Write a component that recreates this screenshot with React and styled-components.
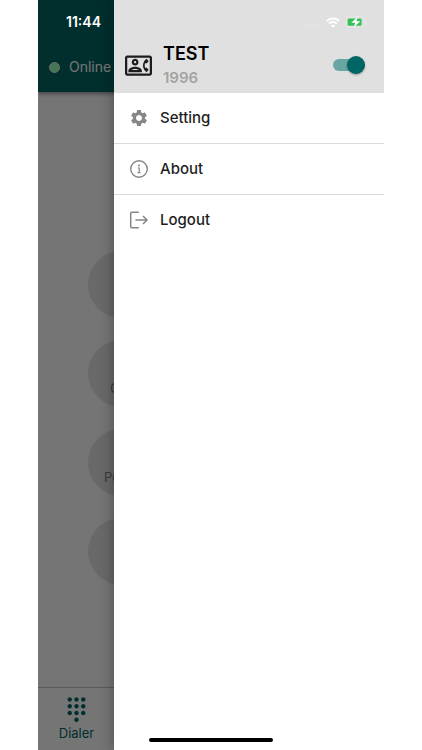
import { useState } from "react";
import { styled, createGlobalStyle } from "styled-components";
import { MdDialpad, MdOutlineContactPhone, MdSettings } from "react-icons/md";

const GlobalStyle = createGlobalStyle`
  * {
    box-sizing: border-box;
  }

  body {
    margin: 0;
    background-color: #ffffff;
    font-family: Inter, "Liberation Sans", sans-serif;
  }

  button {
    padding: 0;
    border: none;
    background: none;
    font: inherit;
    text-align: left;
    cursor: pointer;
  }
`;

const Stage = styled.div`
  padding: 0 38px;
`;

const Phone = styled.div`
  position: relative;
  display: flex;
  flex-direction: column;
  min-height: 100vh;
  overflow: hidden;
`;

const Page = styled.div`
  flex: 1;
  display: flex;
  flex-direction: column;
`;

const AppBar = styled.header`
  display: flex;
  align-items: center;
  gap: 9px;
  padding: 56px 11px 14px;
  background-color: #006664;
  color: #ffffff;
  font-size: 14px;
  line-height: 22px;
  box-shadow: 0 2px 4px rgba(0, 0, 0, 0.4);
`;

const PresenceDot = styled.span`
  width: 11px;
  height: 11px;
  border: 1px solid #e6f0e2;
  border-radius: 50%;
  background-color: #96ffbe;
`;

const Actions = styled.main`
  flex: 1;
  display: flex;
  flex-direction: column;
  justify-content: center;
  gap: 22px;
  padding: 56px 50px 0;
`;

const ActionButton = styled.button`
  width: 67px;
  height: 67px;
  border-radius: 50%;
  background-color: #e4e4e4;
`;

const ActionLabel = styled.span`
  display: block;
  padding-top: 30px;
  padding-left: ${({ $indent }) => $indent};
  color: #808080;
  font-size: 13px;
  line-height: 16px;
`;

const TabBar = styled.nav`
  display: flex;
  border-top: 1px solid #c4c4c4;
`;

const Tab = styled.button`
  display: flex;
  flex-direction: column;
  align-items: center;
  gap: 2px;
  width: 77px;
  padding: 8px 0 9px;
  color: #006664;
  font-size: 13px;
  line-height: 16px;
`;

const Scrim = styled.div`
  position: absolute;
  inset: 0;
  background-color: rgba(0, 0, 0, 0.54);
`;

const Drawer = styled.aside`
  position: absolute;
  inset: 0 0 0 76px;
  background-color: #ffffff;
  box-shadow: 0 0 14px rgba(0, 0, 0, 0.35);
`;

const DrawerHeader = styled.div`
  display: flex;
  align-items: center;
  gap: 11px;
  padding: 42px 19px 5px 11px;
  background-color: #e0e0e0;
  color: #1c1c1e;
`;

const Account = styled.div`
  flex: 1;
`;

const AccountName = styled.h1`
  margin: 0;
  color: #000000;
  font-size: 18px;
  font-weight: 600;
  line-height: 24px;
`;

const Extension = styled.p`
  margin: 0;
  padding-top: 2px;
  color: #a3a3a3;
  font-size: 15px;
  font-weight: 600;
  line-height: 20px;
`;

const Switch = styled.input`
  appearance: none;
  display: flex;
  align-items: center;
  width: 32px;
  height: 12px;
  margin: 0;
  border-radius: 6px;
  background: linear-gradient(#69a5a2, #69a5a2) left / 28px 100% no-repeat;
  cursor: pointer;

  &::before {
    content: "";
    width: 18px;
    height: 18px;
    border-radius: 50%;
    background-color: #9e9e9e;
    box-shadow: 0 1px 2px rgba(0, 0, 0, 0.35);
  }

  &:checked::before {
    margin-left: 14px;
    background-color: #006664;
  }
`;

const Menu = styled.ul`
  margin: 0;
  padding: 0;
  list-style: none;
`;

const MenuItem = styled.li`
  & + & {
    border-top: 1px solid #dadada;
  }
`;

const MenuButton = styled.button`
  display: flex;
  align-items: center;
  gap: 11px;
  width: 100%;
  height: 50px;
  padding: 0 15px;
  color: #1f1f1f;
  font-size: 15px;
  font-weight: 500;
  line-height: 20px;

  svg {
    color: #868686;
  }
`;

const StatusBar = styled.div`
  position: absolute;
  inset: 0 0 auto 0;
  display: flex;
  align-items: center;
  justify-content: space-between;
  padding: 12px 16px 0 28px;
  color: #ffffff;
  font-size: 14px;
  font-weight: 600;
  line-height: 20px;
`;

const StatusIcons = styled.div`
  display: flex;
  align-items: center;
  gap: 6px;
`;

const HomeIndicator = styled.div`
  position: absolute;
  bottom: 8px;
  left: 50%;
  width: 124px;
  height: 4px;
  border-radius: 2px;
  background-color: #000000;
  transform: translateX(-50%);
`;

function InfoIcon() {
  return (
    <svg width="20" height="20" viewBox="0 0 20 20" fill="none" aria-hidden="true">
      <circle cx="10" cy="10" r="8.3" stroke="currentColor" strokeWidth="1.4" />
      <circle cx="10" cy="6.4" r="1" fill="currentColor" />
      <path d="M8.7 9h1.5v4.6M8.6 13.6h3" stroke="currentColor" strokeWidth="1.2" />
    </svg>
  );
}

function LogoutIcon() {
  return (
    <svg width="20" height="20" viewBox="0 0 20 20" fill="none" stroke="currentColor" strokeWidth="1.5" aria-hidden="true">
      <path d="M9.8 2.3H2.9q-1.2 0-1.2 1.2v13q0 1.2 1.2 1.2h6.9" />
      <path d="M6.5 10h11.3M14 6l4 4-4 4" />
    </svg>
  );
}

function SignalIcon() {
  return (
    <svg width="16" height="12" viewBox="0 0 16 12" fill="#e8e8e8" aria-hidden="true">
      <circle cx="2" cy="9.5" r="1.2" />
      <circle cx="6" cy="9.5" r="1.2" />
      <circle cx="10" cy="9.5" r="1.2" />
      <circle cx="14" cy="9.5" r="1.2" />
    </svg>
  );
}

function WifiIcon() {
  return (
    <svg width="14" height="11" viewBox="0 0 14 11" fill="none" stroke="#ffffff" strokeWidth="2" aria-hidden="true">
      <path d="M0.7 4.1a9 9 0 0 1 12.6 0" />
      <path d="M3.1 6.6a5.6 5.6 0 0 1 7.8 0" />
      <path d="M7 10.8L4.9 8.6a3.1 3.1 0 0 1 4.2 0z" fill="#ffffff" stroke="none" />
    </svg>
  );
}

function BatteryIcon() {
  return (
    <svg width="22" height="12" viewBox="0 0 22 12" aria-hidden="true">
      <rect x="0.5" y="0.9" width="18.5" height="10.2" rx="3" fill="none" stroke="#e8e8e8" />
      <path d="M20 4.2q1.6 0.6 1.6 1.8t-1.6 1.8z" fill="#e8e8e8" />
      <rect x="1.6" y="2.4" width="14" height="7.4" rx="1.3" fill="#34c058" />
      <path d="M11.8 0.5L5.3 6.7h3.8L7.8 11.5l6.5-6.2h-3.7z" fill="#ffffff" />
    </svg>
  );
}

const MENU = [
  { label: "Setting", icon: <MdSettings size={20} /> },
  { label: "About", icon: <InfoIcon /> },
  { label: "Logout", icon: <LogoutIcon /> },
];

const ACTIONS = [
  { id: 1 },
  { id: 2, label: "C", indent: "22px" },
  { id: 3, label: "Po", indent: "16px" },
  { id: 4 },
];

export default function App() {
  const [available, setAvailable] = useState(true);

  return (
    <Stage>
      <GlobalStyle />
      <Phone>
        <Page>
          <AppBar>
            <PresenceDot />
            Online
          </AppBar>
          <Actions>
            {ACTIONS.map((action) => (
              <ActionButton key={action.id} type="button">
                {action.label && (
                  <ActionLabel $indent={action.indent}>{action.label}</ActionLabel>
                )}
              </ActionButton>
            ))}
          </Actions>
          <TabBar>
            <Tab type="button">
              <MdDialpad size={27} />
              Dialer
            </Tab>
          </TabBar>
        </Page>
        <Scrim />
        <Drawer>
          <DrawerHeader>
            <MdOutlineContactPhone size={27} />
            <Account>
              <AccountName>TEST</AccountName>
              <Extension>1996</Extension>
            </Account>
            <Switch
              type="checkbox"
              role="switch"
              aria-label="Available"
              checked={available}
              onChange={(event) => setAvailable(event.target.checked)}
            />
          </DrawerHeader>
          <Menu>
            {MENU.map((item) => (
              <MenuItem key={item.label}>
                <MenuButton type="button">
                  {item.icon}
                  {item.label}
                </MenuButton>
              </MenuItem>
            ))}
          </Menu>
        </Drawer>
        <StatusBar>
          <span>11:44</span>
          <StatusIcons>
            <SignalIcon />
            <WifiIcon />
            <BatteryIcon />
          </StatusIcons>
        </StatusBar>
        <HomeIndicator />
      </Phone>
    </Stage>
  );
}
